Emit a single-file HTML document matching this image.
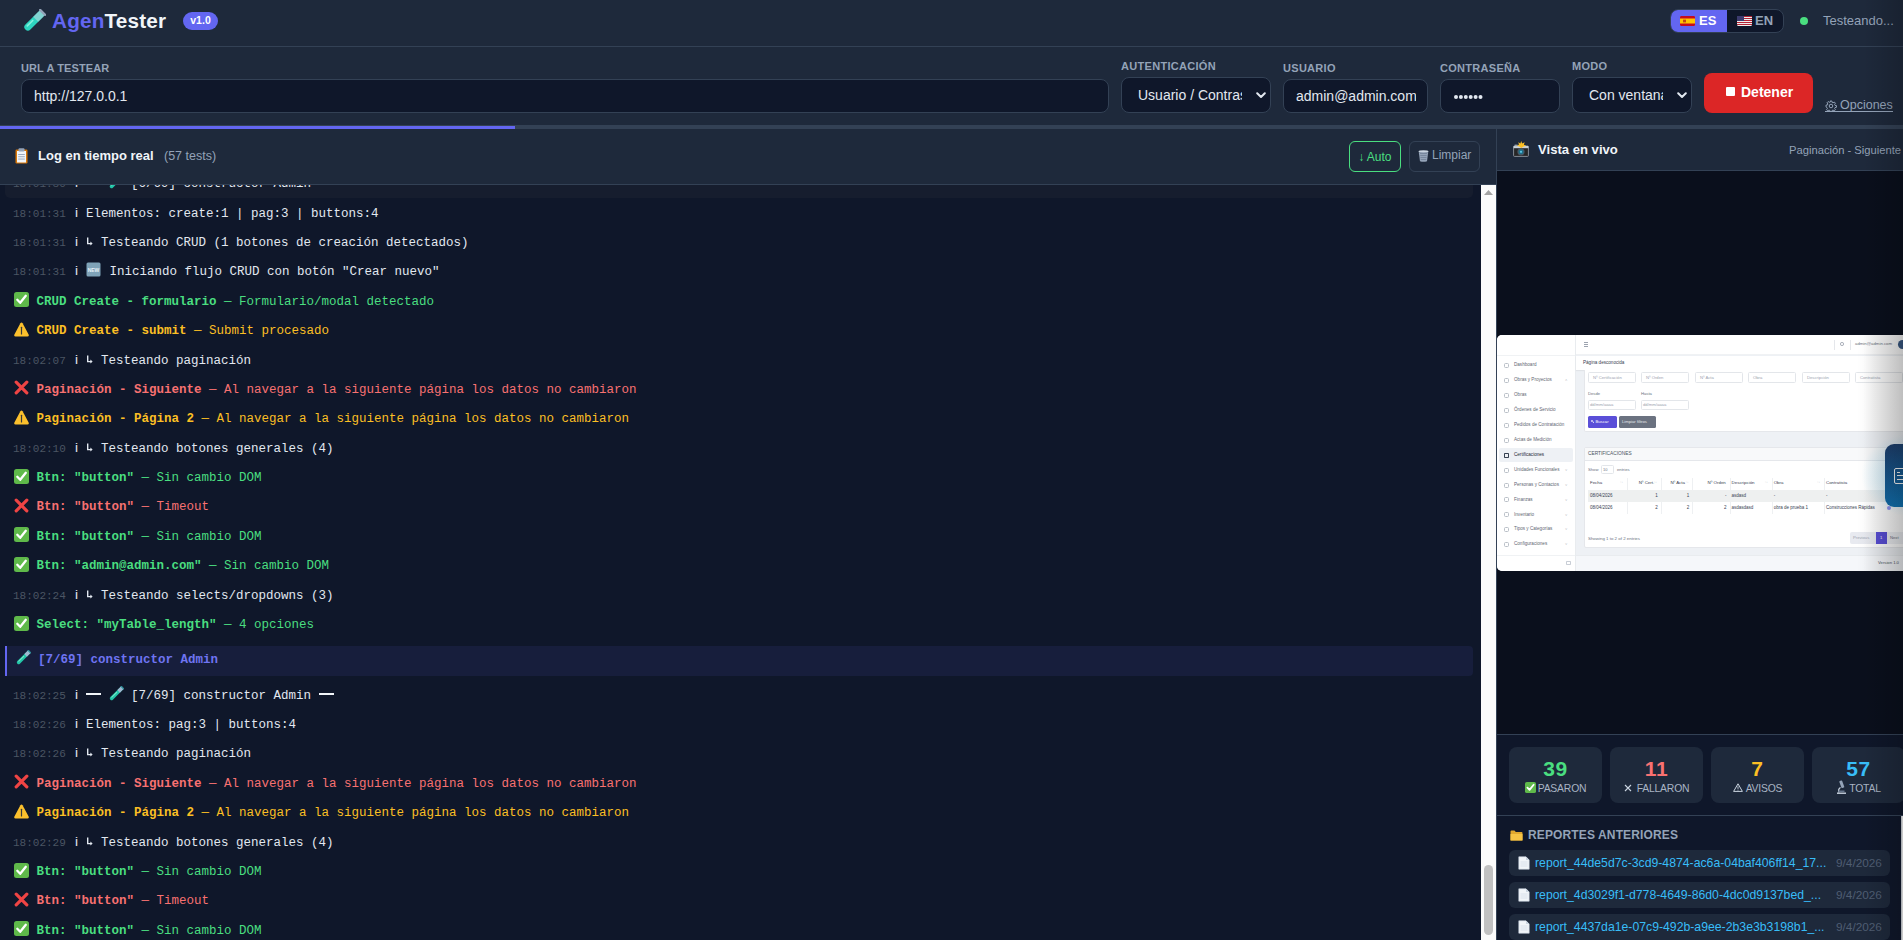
<!DOCTYPE html>
<html lang="es">
<head>
<meta charset="utf-8">
<title>AgenTester</title>
<style>
*{box-sizing:border-box;margin:0;padding:0}
html,body{width:1903px;height:940px;overflow:hidden;background:#0f172a;font-family:"Liberation Sans",sans-serif;color:#e2e8f0}
.abs{position:absolute}
#hdr{position:absolute;left:0;top:0;width:1903px;height:47px;background:#1e293b;border-bottom:1px solid #334155}
#cfg{position:absolute;left:0;top:47px;width:1903px;height:79px;background:#1e293b;border-bottom:1px solid #334155}
#prog{position:absolute;left:0;top:126px;width:1903px;height:3px;background:#334155}
#prog i{position:absolute;left:0;top:0;height:3px;width:515px;background:#6366f1}
.lbl{position:absolute;font-size:11px;font-weight:bold;letter-spacing:0.3px;color:#94a3b8;white-space:nowrap}
.inp{position:absolute;background:#0f172a;border:1px solid #334155;border-radius:8px;color:#e2e8f0;font-size:14px;white-space:nowrap;overflow:hidden}
#left{position:absolute;left:0;top:129px;width:1497px;height:811px;border-right:1px solid #334155;background:#0f172a}
#lhdr{position:absolute;left:0;top:0;width:1496px;height:56px;background:#1e293b;border-bottom:1px solid #334155}
#log{position:absolute;left:0;top:56px;width:1481px;height:755px;background:#0f172a;overflow:hidden;font-family:"Liberation Mono",monospace}
#sb{position:absolute;left:1481px;top:56px;width:15px;height:755px;background:#fbfbfb}
#right{position:absolute;left:1497px;top:129px;width:420px;height:811px;background:#0f172a}
#rhdr{position:absolute;left:0;top:0;width:420px;height:42px;background:#1e293b;border-bottom:1px solid #334155}
#live{position:absolute;left:0;top:42px;width:420px;height:564px;background:#0a0f1c;border-bottom:1px solid #334155}
#stats{position:absolute;left:0;top:606px;width:420px;height:81px;background:#0f172a;border-bottom:1px solid #334155}
#reps{position:absolute;left:0;top:687px;width:420px;height:124px;background:#0f172a}
#fade{position:absolute;left:1863px;top:0;width:40px;height:940px;background:linear-gradient(to right,rgba(0,0,0,0),rgba(0,0,0,0.18));pointer-events:none}
.row{position:absolute;left:13px;height:20px;line-height:20px;font-size:12.5px;white-space:nowrap;color:#e2e8f0}
.ts{display:inline-block;width:58px;font-size:11px;color:#4b5563}
.ii{display:inline-block;width:7.5px;font-family:"Liberation Sans",sans-serif;font-size:13.6px;text-align:right;padding-right:0.5px}
.em{display:inline-block;vertical-align:-2px;margin-right:1px}
.tb{margin-right:0}
.st{vertical-align:-2.5px;margin-left:0.8px;margin-right:0.2px}
.dash{display:inline-block;width:15px;height:2.2px;background:#f1f5f9;vertical-align:3.6px}
.ar{display:inline-block;vertical-align:-1px}
.cok{color:#4ade80}.cerr{color:#f87171}.cwarn{color:#fbbf24}
.hd{position:absolute;left:5px;width:1468px;height:30px;background:#171e3c;border-left:2px solid #6366f1;border-radius:0 4px 4px 0}
.card{position:absolute;top:12px;width:93px;height:56px;border-radius:8px;background:#1e293b}
.num{position:absolute;left:0;top:10px;width:93px;text-align:center;font-size:21px;font-weight:bold;line-height:24px;letter-spacing:0.6px}
.clbl{position:absolute;top:35px;left:0!important;width:93px;text-align:center;font-size:10.4px;letter-spacing:-0.2px;line-height:13px;color:#a9b4c4;white-space:nowrap}
.rep{position:absolute;left:12px;width:381px;height:26px;border-radius:6px;background:#1e293b}
.rn{position:absolute;left:26px;top:6px;font-size:12.25px;line-height:15px;color:#38bdf8;white-space:nowrap}
.rd{position:absolute;left:327px;top:6px;font-size:11.8px;line-height:14px;color:#4f5d72;white-space:nowrap}
</style>
</head>
<body>
<div id="hdr">
  <svg class="abs" style="left:21px;top:9px" width="25" height="25" viewBox="0 0 24 24">
    <g transform="rotate(45 12 12)">
      <rect x="8.6" y="-1" width="6.8" height="24" rx="3.4" fill="#2dd4bf"/>
      <rect x="8.6" y="-1" width="6.8" height="10" fill="#c7d2e0" opacity="0.55"/>
      <rect x="7.6" y="-1.5" width="8.8" height="2.2" rx="1" fill="#94a3b8"/>
      <rect x="10" y="11" width="1.6" height="9" rx="0.8" fill="#99f6e4" opacity="0.8"/>
    </g>
  </svg>
  <div class="abs" style="left:52px;top:9px;font-size:20.7px;font-weight:bold;line-height:24px;letter-spacing:0.2px"><span style="color:#6366f1">Agen</span><span style="color:#f1f5f9">Tester</span></div>
  <div class="abs" style="left:183px;top:12px;width:35px;height:18px;border-radius:9px;background:#6366f1;color:#fff;font-size:10.5px;font-weight:bold;line-height:17px;text-align:center">v1.0</div>
  <div class="abs" style="left:1670px;top:8.6px;width:114px;height:24.6px;border-radius:8px;border:1px solid #334155;background:#0f172a;overflow:hidden">
    <div class="abs" style="left:-1px;top:-1px;width:57px;height:25px;background:#6366f1"></div>
    <svg class="abs" style="left:9px;top:6.5px" width="15" height="10" viewBox="0 0 15 11" preserveAspectRatio="none"><rect width="15" height="11" rx="1.5" fill="#c60b1e"/><rect y="2.75" width="15" height="5.5" fill="#ffc400"/><rect x="3" y="4" width="3" height="3" fill="#ad1519" opacity="0.7"/></svg>
    <div class="abs" style="left:28px;top:0;line-height:22px;font-size:13px;font-weight:bold;color:#fff">ES</div>
    <svg class="abs" style="left:66px;top:6.5px" width="15" height="10" viewBox="0 0 15 11" preserveAspectRatio="none"><rect width="15" height="11" rx="1.5" fill="#eee"/><g fill="#b22234"><rect y="0" width="15" height="1.1"/><rect y="2.2" width="15" height="1.1"/><rect y="4.4" width="15" height="1.1"/><rect y="6.6" width="15" height="1.1"/><rect y="8.8" width="15" height="1.1"/></g><rect width="7" height="5.5" fill="#3c3b6e"/></svg>
    <div class="abs" style="left:84px;top:0;line-height:22px;font-size:13px;font-weight:bold;color:#94a3b8">EN</div>
  </div>
  <div class="abs" style="left:1800px;top:17px;width:8px;height:8px;border-radius:4px;background:#4ade80"></div>
  <div class="abs" style="left:1823px;top:12px;font-size:13px;line-height:18px;color:#94a3b8;white-space:nowrap">Testeando...</div>
</div>
<div id="cfg">
  <div class="lbl" style="left:21px;top:15px;letter-spacing:0.1px">URL A TESTEAR</div>
  <div class="inp" style="left:21px;top:32px;width:1088px;height:34px;padding-left:12px;line-height:32px">http://127.0.0.1</div>
  <div class="lbl" style="left:1121px;top:13px">AUTENTICACIÓN</div>
  <div class="inp" style="left:1121px;top:30px;width:150px;height:36px;line-height:34px"><span class="abs" style="left:16px;top:0;width:104px;overflow:hidden">Usuario / Contraseña</span><svg class="abs" style="right:4px;top:14px" width="10" height="7" viewBox="0 0 10 7"><path d="M1.2 1.2 L5 5 L8.8 1.2" fill="none" stroke="#e2e8f0" stroke-width="2" stroke-linecap="round" stroke-linejoin="round"/></svg></div>
  <div class="lbl" style="left:1283px;top:15px">USUARIO</div>
  <div class="inp" style="left:1283px;top:32px;width:145px;height:34px;line-height:32px"><span class="abs" style="left:12px;top:0;width:120px;overflow:hidden">admin@admin.com</span></div>
  <div class="lbl" style="left:1440px;top:15px">CONTRASEÑA</div>
  <div class="inp" style="left:1440px;top:32px;width:120px;height:34px"><svg class="abs" style="left:12.6px;top:15px" width="30" height="4" viewBox="0 0 30 4" fill="#e2e8f0"><circle cx="2.0" cy="2" r="2"/><circle cx="6.9" cy="2" r="2"/><circle cx="11.8" cy="2" r="2"/><circle cx="16.7" cy="2" r="2"/><circle cx="21.6" cy="2" r="2"/><circle cx="26.5" cy="2" r="2"/></svg></div>
  <div class="lbl" style="left:1572px;top:13px">MODO</div>
  <div class="inp" style="left:1572px;top:30px;width:120px;height:36px;line-height:34px"><span class="abs" style="left:16px;top:0;width:74px;overflow:hidden">Con ventana visible</span><svg class="abs" style="right:4px;top:14px" width="10" height="7" viewBox="0 0 10 7"><path d="M1.2 1.2 L5 5 L8.8 1.2" fill="none" stroke="#e2e8f0" stroke-width="2" stroke-linecap="round" stroke-linejoin="round"/></svg></div>
  <div class="abs" style="left:1704px;top:26px;width:109px;height:40px;border-radius:8px;background:#dc2626;color:#fff;font-size:14px;font-weight:bold;line-height:40px;white-space:nowrap"><span class="abs" style="left:22px;top:14px;width:9px;height:9px;background:#fff;border-radius:1px"></span><span class="abs" style="left:37px;top:-1px">Detener</span></div>
  <div class="abs" style="left:1825px;top:50px;width:68px;height:15px;font-size:12.5px;line-height:16px;color:#94a3b8;white-space:nowrap;border-bottom:1px solid #94a3b8"><svg style="position:absolute;left:0;top:2.5px" width="12" height="12" viewBox="0 0 24 24"><path fill="none" stroke="#94a3b8" stroke-width="2" stroke-linejoin="round" d="M10.3 2h3.4l.5 2.9 1.9.8 2.4-1.7 2.4 2.4-1.7 2.4.8 1.9 2.9.5v3.4l-2.9.5-.8 1.9 1.7 2.4-2.4 2.4-2.4-1.7-1.9.8-.5 2.9h-3.4l-.5-2.9-1.9-.8-2.4 1.7-2.4-2.4 1.7-2.4-.8-1.9L2 13.7v-3.4l2.9-.5.8-1.9-1.7-2.4 2.4-2.4 2.4 1.7 1.9-.8z"/><circle cx="12" cy="12" r="3.6" fill="none" stroke="#94a3b8" stroke-width="2"/></svg><span class="abs" style="left:15px;top:0">Opciones</span></div>
</div>
<div id="prog"><i></i></div>
<div id="left">
  <div id="lhdr">
    <svg class="abs" style="left:15px;top:19px" width="13" height="16" viewBox="0 0 13 16"><rect x="0.5" y="1.5" width="12" height="14" rx="1.2" fill="#d97706"/><rect x="2" y="3" width="9" height="11.5" fill="#f1f5f9"/><rect x="3.5" y="0.3" width="6" height="3.2" rx="1" fill="#94a3b8"/><g fill="#94a3b8"><rect x="3.2" y="6" width="6.6" height="0.9"/><rect x="3.2" y="8.3" width="6.6" height="0.9"/><rect x="3.2" y="10.6" width="6.6" height="0.9"/></g></svg>
    <div class="abs" style="left:38px;top:19px;font-size:13px;font-weight:bold;line-height:16px;color:#f1f5f9;white-space:nowrap">Log en tiempo real</div>
    <div class="abs" style="left:164px;top:19px;font-size:12.5px;line-height:16px;color:#94a3b8;white-space:nowrap">(57 tests)</div>
    <div class="abs" style="left:1349px;top:12px;width:52px;height:31px;border:1px solid #4ade80;border-radius:6px;color:#4ade80;font-size:12px;line-height:29px;white-space:nowrap"><span class="abs" style="left:8.2px;top:1px">&#8595; Auto</span></div>
    <div class="abs" style="left:1409px;top:12px;width:71px;height:31px;border:1px solid #334155;border-radius:6px;color:#94a3b8;font-size:12px;line-height:29px;white-space:nowrap"><svg class="abs" style="left:8px;top:8px" width="11" height="12" viewBox="0 0 11 12"><ellipse cx="5.5" cy="1.6" rx="5" ry="1.4" fill="#cbd5e1"/><path d="M0.8 2.2 L10.2 2.2 L9 11.2 Q5.5 12.2 2 11.2 Z" fill="#94a3b8"/><path d="M2 3.5 L9 3.5 M2.3 5.5 L8.7 5.5 M2.5 7.5 L8.5 7.5 M2.8 9.5 L8.2 9.5" stroke="#64748b" stroke-width="0.6"/></svg><span class="abs" style="left:22px;top:-1px">Limpiar</span></div>
  </div>
  <div id="log"><div class="abs" style="left:5px;top:-20px;width:1468px;height:32.8px;border-radius:5px;background:#161d2e"></div>
<div class="row" style="top:-11.82px"><span class="ts">18:01:30</span><span class="ii">i</span> <span class="msg"><span class="dash"></span> <svg class="em tb" width="15" height="15" viewBox="0 0 15 15"><g transform="rotate(45 7.5 7.5)"><rect x="5.7" y="-1" width="3.6" height="17.2" rx="1.8" fill="#22c5a8"/><rect x="5.7" y="-1" width="3.6" height="5.5" fill="#9fb8d0"/><rect x="5.1" y="-1.6" width="4.8" height="1.4" rx="0.5" fill="#2f8f9a"/><rect x="6.3" y="6" width="1" height="8" rx="0.5" fill="#a7f3d0" opacity="0.7"/></g></svg> [6/69] constructor Admin <span class="dash"></span></span></div>
<div class="row" style="top:17.57px"><span class="ts">18:01:31</span><span class="ii">i</span> <span class="msg">Elementos: create:1 | pag:3 | buttons:4</span></div>
<div class="row" style="top:46.96px"><span class="ts">18:01:31</span><span class="ii">i</span> <span class="msg"><svg class="ar" width="7.5" height="12" viewBox="0 0 7.5 12"><path d="M1.7 2.6 L1.7 8.6 L5.6 8.6" fill="none" stroke="#e2e8f0" stroke-width="1.4"/><path d="M4.4 6.6 L6.6 8.6 L4.4 10.6 Z" fill="#e2e8f0"/></svg> Testeando CRUD (1 botones de creación detectados)</span></div>
<div class="row" style="top:76.35px"><span class="ts">18:01:31</span><span class="ii">i</span> <span class="msg"><svg class="em" width="15" height="15" viewBox="0 0 15 15"><rect x="0.5" y="0.5" width="14" height="14" rx="1.5" fill="#7fa3b8"/><text x="7.5" y="9.6" font-family="Liberation Sans" font-size="5" font-weight="bold" fill="#e8f2f8" text-anchor="middle">NEW</text></svg> Iniciando flujo CRUD con botón "Crear nuevo"</span></div>
<div style="top:106.74px" class="row cok"><svg class="em st" width="15" height="15" viewBox="0 0 15 15"><rect x="0" y="0" width="15" height="15" rx="2.5" fill="#5fb94a"/><path d="M3.3 7.8 L6.2 10.8 L11.8 3.8" fill="none" stroke="#fff" stroke-width="2.3" stroke-linecap="round" stroke-linejoin="round"/></svg> <b>CRUD Create - formulario</b> — Formulario/modal detectado</div>
<div style="top:136.13px" class="row cwarn"><svg class="em st" width="15" height="15" viewBox="0 0 15 15"><path d="M6.4 1.3 Q7.5 -0.4 8.6 1.3 L14.6 12.6 Q15.3 14.4 13.4 14.4 L1.6 14.4 Q-0.3 14.4 0.4 12.6 Z" fill="#fbc02d"/><rect x="6.9" y="4.8" width="1.2" height="7.8" rx="0.5" fill="#3b3b3b"/></svg> <b>CRUD Create - submit</b> — Submit procesado</div>
<div class="row" style="top:164.52px"><span class="ts">18:02:07</span><span class="ii">i</span> <span class="msg"><svg class="ar" width="7.5" height="12" viewBox="0 0 7.5 12"><path d="M1.7 2.6 L1.7 8.6 L5.6 8.6" fill="none" stroke="#e2e8f0" stroke-width="1.4"/><path d="M4.4 6.6 L6.6 8.6 L4.4 10.6 Z" fill="#e2e8f0"/></svg> Testeando paginación</span></div>
<div style="top:194.91px" class="row cerr"><svg class="em st" width="15" height="15" viewBox="0 0 15 15"><path d="M2.2 2.2 L12.8 12.8 M12.8 2.2 L2.2 12.8" stroke="#ef4444" stroke-width="3.2" stroke-linecap="round"/></svg> <b>Paginación - Siguiente</b> — Al navegar a la siguiente página los datos no cambiaron</div>
<div style="top:224.30px" class="row cwarn"><svg class="em st" width="15" height="15" viewBox="0 0 15 15"><path d="M6.4 1.3 Q7.5 -0.4 8.6 1.3 L14.6 12.6 Q15.3 14.4 13.4 14.4 L1.6 14.4 Q-0.3 14.4 0.4 12.6 Z" fill="#fbc02d"/><rect x="6.9" y="4.8" width="1.2" height="7.8" rx="0.5" fill="#3b3b3b"/></svg> <b>Paginación - Página 2</b> — Al navegar a la siguiente página los datos no cambiaron</div>
<div class="row" style="top:252.69px"><span class="ts">18:02:10</span><span class="ii">i</span> <span class="msg"><svg class="ar" width="7.5" height="12" viewBox="0 0 7.5 12"><path d="M1.7 2.6 L1.7 8.6 L5.6 8.6" fill="none" stroke="#e2e8f0" stroke-width="1.4"/><path d="M4.4 6.6 L6.6 8.6 L4.4 10.6 Z" fill="#e2e8f0"/></svg> Testeando botones generales (4)</span></div>
<div style="top:283.08px" class="row cok"><svg class="em st" width="15" height="15" viewBox="0 0 15 15"><rect x="0" y="0" width="15" height="15" rx="2.5" fill="#5fb94a"/><path d="M3.3 7.8 L6.2 10.8 L11.8 3.8" fill="none" stroke="#fff" stroke-width="2.3" stroke-linecap="round" stroke-linejoin="round"/></svg> <b>Btn: "button"</b> — Sin cambio DOM</div>
<div style="top:312.47px" class="row cerr"><svg class="em st" width="15" height="15" viewBox="0 0 15 15"><path d="M2.2 2.2 L12.8 12.8 M12.8 2.2 L2.2 12.8" stroke="#ef4444" stroke-width="3.2" stroke-linecap="round"/></svg> <b>Btn: "button"</b> — Timeout</div>
<div style="top:341.86px" class="row cok"><svg class="em st" width="15" height="15" viewBox="0 0 15 15"><rect x="0" y="0" width="15" height="15" rx="2.5" fill="#5fb94a"/><path d="M3.3 7.8 L6.2 10.8 L11.8 3.8" fill="none" stroke="#fff" stroke-width="2.3" stroke-linecap="round" stroke-linejoin="round"/></svg> <b>Btn: "button"</b> — Sin cambio DOM</div>
<div style="top:371.25px" class="row cok"><svg class="em st" width="15" height="15" viewBox="0 0 15 15"><rect x="0" y="0" width="15" height="15" rx="2.5" fill="#5fb94a"/><path d="M3.3 7.8 L6.2 10.8 L11.8 3.8" fill="none" stroke="#fff" stroke-width="2.3" stroke-linecap="round" stroke-linejoin="round"/></svg> <b>Btn: "admin@admin.com"</b> — Sin cambio DOM</div>
<div class="row" style="top:399.64px"><span class="ts">18:02:24</span><span class="ii">i</span> <span class="msg"><svg class="ar" width="7.5" height="12" viewBox="0 0 7.5 12"><path d="M1.7 2.6 L1.7 8.6 L5.6 8.6" fill="none" stroke="#e2e8f0" stroke-width="1.4"/><path d="M4.4 6.6 L6.6 8.6 L4.4 10.6 Z" fill="#e2e8f0"/></svg> Testeando selects/dropdowns (3)</span></div>
<div style="top:430.03px" class="row cok"><svg class="em st" width="15" height="15" viewBox="0 0 15 15"><rect x="0" y="0" width="15" height="15" rx="2.5" fill="#5fb94a"/><path d="M3.3 7.8 L6.2 10.8 L11.8 3.8" fill="none" stroke="#fff" stroke-width="2.3" stroke-linecap="round" stroke-linejoin="round"/></svg> <b>Select: "myTable_length"</b> — 4 opciones</div>
<div class="hd" style="top:461px"></div>
<div class="row" style="top:465.17px;left:15.5px;color:#6f74f2;font-weight:bold"><svg class="em tb" width="15" height="15" viewBox="0 0 15 15"><g transform="rotate(45 7.5 7.5)"><rect x="5.7" y="-1" width="3.6" height="17.2" rx="1.8" fill="#22c5a8"/><rect x="5.7" y="-1" width="3.6" height="5.5" fill="#9fb8d0"/><rect x="5.1" y="-1.6" width="4.8" height="1.4" rx="0.5" fill="#2f8f9a"/><rect x="6.3" y="6" width="1" height="8" rx="0.5" fill="#a7f3d0" opacity="0.7"/></g></svg> [7/69] constructor Admin</div>
<div class="row" style="top:499.67px"><span class="ts">18:02:25</span><span class="ii">i</span> <span class="msg"><span class="dash"></span> <svg class="em tb" width="15" height="15" viewBox="0 0 15 15"><g transform="rotate(45 7.5 7.5)"><rect x="5.7" y="-1" width="3.6" height="17.2" rx="1.8" fill="#22c5a8"/><rect x="5.7" y="-1" width="3.6" height="5.5" fill="#9fb8d0"/><rect x="5.1" y="-1.6" width="4.8" height="1.4" rx="0.5" fill="#2f8f9a"/><rect x="6.3" y="6" width="1" height="8" rx="0.5" fill="#a7f3d0" opacity="0.7"/></g></svg> [7/69] constructor Admin <span class="dash"></span></span></div>
<div class="row" style="top:529.06px"><span class="ts">18:02:26</span><span class="ii">i</span> <span class="msg">Elementos: pag:3 | buttons:4</span></div>
<div class="row" style="top:558.45px"><span class="ts">18:02:26</span><span class="ii">i</span> <span class="msg"><svg class="ar" width="7.5" height="12" viewBox="0 0 7.5 12"><path d="M1.7 2.6 L1.7 8.6 L5.6 8.6" fill="none" stroke="#e2e8f0" stroke-width="1.4"/><path d="M4.4 6.6 L6.6 8.6 L4.4 10.6 Z" fill="#e2e8f0"/></svg> Testeando paginación</span></div>
<div style="top:588.84px" class="row cerr"><svg class="em st" width="15" height="15" viewBox="0 0 15 15"><path d="M2.2 2.2 L12.8 12.8 M12.8 2.2 L2.2 12.8" stroke="#ef4444" stroke-width="3.2" stroke-linecap="round"/></svg> <b>Paginación - Siguiente</b> — Al navegar a la siguiente página los datos no cambiaron</div>
<div style="top:618.23px" class="row cwarn"><svg class="em st" width="15" height="15" viewBox="0 0 15 15"><path d="M6.4 1.3 Q7.5 -0.4 8.6 1.3 L14.6 12.6 Q15.3 14.4 13.4 14.4 L1.6 14.4 Q-0.3 14.4 0.4 12.6 Z" fill="#fbc02d"/><rect x="6.9" y="4.8" width="1.2" height="7.8" rx="0.5" fill="#3b3b3b"/></svg> <b>Paginación - Página 2</b> — Al navegar a la siguiente página los datos no cambiaron</div>
<div class="row" style="top:646.62px"><span class="ts">18:02:29</span><span class="ii">i</span> <span class="msg"><svg class="ar" width="7.5" height="12" viewBox="0 0 7.5 12"><path d="M1.7 2.6 L1.7 8.6 L5.6 8.6" fill="none" stroke="#e2e8f0" stroke-width="1.4"/><path d="M4.4 6.6 L6.6 8.6 L4.4 10.6 Z" fill="#e2e8f0"/></svg> Testeando botones generales (4)</span></div>
<div style="top:677.01px" class="row cok"><svg class="em st" width="15" height="15" viewBox="0 0 15 15"><rect x="0" y="0" width="15" height="15" rx="2.5" fill="#5fb94a"/><path d="M3.3 7.8 L6.2 10.8 L11.8 3.8" fill="none" stroke="#fff" stroke-width="2.3" stroke-linecap="round" stroke-linejoin="round"/></svg> <b>Btn: "button"</b> — Sin cambio DOM</div>
<div style="top:706.40px" class="row cerr"><svg class="em st" width="15" height="15" viewBox="0 0 15 15"><path d="M2.2 2.2 L12.8 12.8 M12.8 2.2 L2.2 12.8" stroke="#ef4444" stroke-width="3.2" stroke-linecap="round"/></svg> <b>Btn: "button"</b> — Timeout</div>
<div style="top:735.79px" class="row cok"><svg class="em st" width="15" height="15" viewBox="0 0 15 15"><rect x="0" y="0" width="15" height="15" rx="2.5" fill="#5fb94a"/><path d="M3.3 7.8 L6.2 10.8 L11.8 3.8" fill="none" stroke="#fff" stroke-width="2.3" stroke-linecap="round" stroke-linejoin="round"/></svg> <b>Btn: "button"</b> — Sin cambio DOM</div></div>
  <div id="sb"><svg class="abs" style="left:3px;top:5px" width="9" height="5" viewBox="0 0 9 5"><path d="M0 5 L4.5 0 L9 5 Z" fill="#a3a3a3"/></svg><div class="abs" style="left:3px;top:680px;width:9px;height:70px;border-radius:4.5px;background:#c1c1c1"></div></div>
</div>
<div id="right">
  <div id="rhdr">
    <svg class="abs" style="left:16px;top:12px" width="16" height="16" viewBox="0 0 16 16"><rect x="0.6" y="5" width="14.8" height="10.4" rx="0.8" fill="#262626" stroke="#8e96a0" stroke-width="0.9"/><rect x="0.6" y="5" width="14.8" height="2.2" fill="#c9d1d9"/><rect x="1.6" y="3.6" width="3" height="1.6" fill="#9aa3ad"/><circle cx="8" cy="10.8" r="3.6" fill="#4b5563"/><circle cx="8" cy="10.8" r="2.5" fill="#1d6f88"/><circle cx="8" cy="10.8" r="1.1" fill="#5ec4e6"/><path d="M8.2 0 L9.2 2.4 L11.6 1.2 L10.9 3.8 L13.2 4.6 L10.6 5.6 L8.2 7 L6.4 5.4 L4 4.8 L6 3.6 L5.2 1.2 L7.4 2.4 Z" fill="#fbbf24"/></svg>
    <div class="abs" style="left:41px;top:13px;font-size:13.1px;font-weight:bold;line-height:16px;color:#f1f5f9;white-space:nowrap">Vista en vivo</div>
    <div class="abs" style="right:16px;top:12.8px;font-size:11.2px;line-height:16px;color:#94a3b8;white-space:nowrap">Paginación - Siguiente</div>
  </div>
  <div id="live"><div id="shot" style="position:absolute;left:0;top:164px;width:420px;height:236px;overflow:hidden;border-radius:5px;font-family:'Liberation Sans',sans-serif"><div style="position:absolute;left:0px;top:0px;width:420px;height:236px;background:#eef1f5"></div><div style="position:absolute;left:0px;top:0px;width:79px;height:236px;background:#fff;border-right:1px solid #e9ecef"></div><div style="position:absolute;left:0px;top:20px;width:78px;height:1px;background:#f0f2f4"></div><div style="position:absolute;left:7px;top:27.8px;width:5px;height:5px;border:0.7px solid #b9bfc7;border-radius:1.5px"></div><div style="position:absolute;left:17px;top:26.3px;height:8px;line-height:8px;font-size:4.6px;color:#5f6773;white-space:nowrap;">Dashboard</div><div style="position:absolute;left:7px;top:42.900000000000006px;width:5px;height:5px;border:0.7px solid #b9bfc7;border-radius:1.5px"></div><div style="position:absolute;left:17px;top:41.400000000000006px;height:8px;line-height:8px;font-size:4.6px;color:#5f6773;white-space:nowrap;">Obras y Proyectos</div><div style="position:absolute;left:68px;top:41.400000000000006px;height:8px;line-height:8px;font-size:4px;color:#c0c4ca;white-space:nowrap;">˄</div><div style="position:absolute;left:7px;top:57.6px;width:5px;height:5px;border:0.7px solid #b9bfc7;border-radius:1.5px"></div><div style="position:absolute;left:17px;top:56.1px;height:8px;line-height:8px;font-size:4.6px;color:#5f6773;white-space:nowrap;">Obras</div><div style="position:absolute;left:7px;top:72.5px;width:5px;height:5px;border:0.7px solid #b9bfc7;border-radius:1.5px"></div><div style="position:absolute;left:17px;top:71.0px;height:8px;line-height:8px;font-size:4.6px;color:#5f6773;white-space:nowrap;">Órdenes de Servicio</div><div style="position:absolute;left:7px;top:87.60000000000001px;width:5px;height:5px;border:0.7px solid #b9bfc7;border-radius:1.5px"></div><div style="position:absolute;left:17px;top:86.10000000000001px;height:8px;line-height:8px;font-size:4.6px;color:#5f6773;white-space:nowrap;">Pedidos de Contratación</div><div style="position:absolute;left:7px;top:102.8px;width:5px;height:5px;border:0.7px solid #b9bfc7;border-radius:1.5px"></div><div style="position:absolute;left:17px;top:101.3px;height:8px;line-height:8px;font-size:4.6px;color:#5f6773;white-space:nowrap;">Actas de Medición</div><div style="position:absolute;left:2px;top:113.4px;width:74px;height:14px;background:#eef1f5;border-radius:2px"></div><div style="position:absolute;left:7px;top:117.9px;width:5px;height:5px;border:0.9px solid #374151;border-radius:0.8px"></div><div style="position:absolute;left:17px;top:116.4px;height:8px;line-height:8px;font-size:4.6px;color:#1f2937;white-space:nowrap;">Certificaciones</div><div style="position:absolute;left:7px;top:132.89999999999998px;width:5px;height:5px;border:0.7px solid #b9bfc7;border-radius:1.5px"></div><div style="position:absolute;left:17px;top:131.39999999999998px;height:8px;line-height:8px;font-size:4.6px;color:#5f6773;white-space:nowrap;">Unidades Funcionales</div><div style="position:absolute;left:68px;top:131.39999999999998px;height:8px;line-height:8px;font-size:4px;color:#c0c4ca;white-space:nowrap;">˅</div><div style="position:absolute;left:7px;top:147.7px;width:5px;height:5px;border:0.7px solid #b9bfc7;border-radius:1.5px"></div><div style="position:absolute;left:17px;top:146.2px;height:8px;line-height:8px;font-size:4.6px;color:#5f6773;white-space:nowrap;">Personas y Contactos</div><div style="position:absolute;left:68px;top:146.2px;height:8px;line-height:8px;font-size:4px;color:#c0c4ca;white-space:nowrap;">˅</div><div style="position:absolute;left:7px;top:162.39999999999998px;width:5px;height:5px;border:0.7px solid #b9bfc7;border-radius:1.5px"></div><div style="position:absolute;left:17px;top:160.89999999999998px;height:8px;line-height:8px;font-size:4.6px;color:#5f6773;white-space:nowrap;">Finanzas</div><div style="position:absolute;left:68px;top:160.89999999999998px;height:8px;line-height:8px;font-size:4px;color:#c0c4ca;white-space:nowrap;">˅</div><div style="position:absolute;left:7px;top:177.2px;width:5px;height:5px;border:0.7px solid #b9bfc7;border-radius:1.5px"></div><div style="position:absolute;left:17px;top:175.7px;height:8px;line-height:8px;font-size:4.6px;color:#5f6773;white-space:nowrap;">Inventario</div><div style="position:absolute;left:68px;top:175.7px;height:8px;line-height:8px;font-size:4px;color:#c0c4ca;white-space:nowrap;">˅</div><div style="position:absolute;left:7px;top:191.89999999999998px;width:5px;height:5px;border:0.7px solid #b9bfc7;border-radius:1.5px"></div><div style="position:absolute;left:17px;top:190.39999999999998px;height:8px;line-height:8px;font-size:4.6px;color:#5f6773;white-space:nowrap;">Tipos y Categorías</div><div style="position:absolute;left:68px;top:190.39999999999998px;height:8px;line-height:8px;font-size:4px;color:#c0c4ca;white-space:nowrap;">˅</div><div style="position:absolute;left:7px;top:206.7px;width:5px;height:5px;border:0.7px solid #b9bfc7;border-radius:1.5px"></div><div style="position:absolute;left:17px;top:205.2px;height:8px;line-height:8px;font-size:4.6px;color:#5f6773;white-space:nowrap;">Configuraciones</div><div style="position:absolute;left:68px;top:205.2px;height:8px;line-height:8px;font-size:4px;color:#c0c4ca;white-space:nowrap;">˅</div><div style="position:absolute;left:0px;top:220px;width:78px;height:1px;background:#f0f2f4"></div><div style="position:absolute;left:69px;top:226px;width:5px;height:4px;border:0.7px solid #c9ced6;border-radius:0.8px"></div><div style="position:absolute;left:79px;top:0px;width:341px;height:20px;background:#fff;border-bottom:1px solid #f0f2f4"></div><div style="position:absolute;left:87px;top:7px;width:4px;height:0.8px;background:#9ca3af"></div><div style="position:absolute;left:87px;top:9px;width:4px;height:0.8px;background:#9ca3af"></div><div style="position:absolute;left:87px;top:11px;width:4px;height:0.8px;background:#9ca3af"></div><div style="position:absolute;left:337px;top:5px;width:0.6px;height:10px;background:#e5e7eb"></div><div style="position:absolute;left:353px;top:5px;width:0.6px;height:10px;background:#e5e7eb"></div><div style="position:absolute;left:343px;top:7px;width:3.5px;height:3.5px;border:0.8px solid #9ca3af;border-radius:50%"></div><div style="position:absolute;left:358px;top:5px;height:8px;line-height:8px;font-size:4.3px;color:#6b7280;white-space:nowrap;">admin@admin.com</div><div style="position:absolute;left:401px;top:5px;width:9px;height:9px;background:#3b5b87;border-radius:50%"></div><div style="position:absolute;left:79px;top:21px;width:341px;height:14px;background:#fff;box-shadow:0 1px 1px rgba(0,0,0,0.05)"></div><div style="position:absolute;left:86px;top:23.5px;height:8px;line-height:8px;font-size:4.6px;color:#374151;white-space:nowrap;">Página desconocida</div><div style="position:absolute;left:87px;top:35px;width:333px;height:62px;background:#fff;border:0.6px solid #e5e7eb;border-top:none;border-radius:0 0 2px 2px"></div><div style="position:absolute;left:91px;top:37px;width:48px;height:11px;background:#fff;border:0.6px solid #e3e6ea;border-radius:1.5px"></div><div style="position:absolute;left:96px;top:38.5px;height:8px;line-height:8px;font-size:4.2px;color:#9ca3af;white-space:nowrap;">Nº Certificación</div><div style="position:absolute;left:144px;top:37px;width:48px;height:11px;background:#fff;border:0.6px solid #e3e6ea;border-radius:1.5px"></div><div style="position:absolute;left:149px;top:38.5px;height:8px;line-height:8px;font-size:4.2px;color:#9ca3af;white-space:nowrap;">Nº Orden</div><div style="position:absolute;left:198px;top:37px;width:48px;height:11px;background:#fff;border:0.6px solid #e3e6ea;border-radius:1.5px"></div><div style="position:absolute;left:203px;top:38.5px;height:8px;line-height:8px;font-size:4.2px;color:#9ca3af;white-space:nowrap;">Nº Acta</div><div style="position:absolute;left:251px;top:37px;width:48px;height:11px;background:#fff;border:0.6px solid #e3e6ea;border-radius:1.5px"></div><div style="position:absolute;left:256px;top:38.5px;height:8px;line-height:8px;font-size:4.2px;color:#9ca3af;white-space:nowrap;">Obra</div><div style="position:absolute;left:305px;top:37px;width:48px;height:11px;background:#fff;border:0.6px solid #e3e6ea;border-radius:1.5px"></div><div style="position:absolute;left:310px;top:38.5px;height:8px;line-height:8px;font-size:4.2px;color:#9ca3af;white-space:nowrap;">Descripción</div><div style="position:absolute;left:358px;top:37px;width:48px;height:11px;background:#fff;border:0.6px solid #e3e6ea;border-radius:1.5px"></div><div style="position:absolute;left:363px;top:38.5px;height:8px;line-height:8px;font-size:4.2px;color:#9ca3af;white-space:nowrap;">Contratista</div><div style="position:absolute;left:91px;top:55px;height:8px;line-height:8px;font-size:4.2px;color:#6b7280;white-space:nowrap;">Desde</div><div style="position:absolute;left:144px;top:55px;height:8px;line-height:8px;font-size:4.2px;color:#6b7280;white-space:nowrap;">Hasta</div><div style="position:absolute;left:91px;top:65px;width:48px;height:10px;background:#fff;border:0.6px solid #e3e6ea;border-radius:1.5px"></div><div style="position:absolute;left:93px;top:66px;height:8px;line-height:8px;font-size:4.2px;color:#9ca3af;white-space:nowrap;">dd/mm/aaaa</div><div style="position:absolute;left:144px;top:65px;width:48px;height:10px;background:#fff;border:0.6px solid #e3e6ea;border-radius:1.5px"></div><div style="position:absolute;left:146px;top:66px;height:8px;line-height:8px;font-size:4.2px;color:#9ca3af;white-space:nowrap;">dd/mm/aaaa</div><div style="position:absolute;left:91px;top:81px;width:29px;height:12px;background:#5a4fd8;border-radius:1.5px"></div><div style="position:absolute;left:93.5px;top:84.6px;width:2.6px;height:2.6px;border:0.7px solid #fff;border-radius:50%"></div><div style="position:absolute;left:95.6px;top:86.8px;width:1.4px;height:0.7px;background:#fff;transform:rotate(45deg)"></div><div style="position:absolute;left:98.5px;top:83px;height:8px;line-height:8px;font-size:4.2px;color:#fff;white-space:nowrap;">Buscar</div><div style="position:absolute;left:122px;top:81px;width:37px;height:12px;background:#6b7280;border-radius:1.5px"></div><div style="position:absolute;left:125px;top:83px;height:8px;line-height:8px;font-size:4.2px;color:#e5e7eb;white-space:nowrap;">Limpiar filtros</div><div style="position:absolute;left:87px;top:112px;width:333px;height:101px;background:#fff;border:0.6px solid #e5e7eb;border-radius:2px"></div><div style="position:absolute;left:87.6px;top:112.6px;width:333px;height:13px;background:#f8f9fa;border-bottom:0.7px solid #e5e7eb"></div><div style="position:absolute;left:91px;top:115px;height:8px;line-height:8px;font-size:4.8px;color:#4b5563;white-space:nowrap;">CERTIFICACIONES</div><div style="position:absolute;left:91px;top:131px;height:8px;line-height:8px;font-size:4.2px;color:#6b7280;white-space:nowrap;">Show</div><div style="position:absolute;left:104px;top:130px;width:13px;height:9px;border:0.6px solid #e3e6ea;border-radius:1.5px"></div><div style="position:absolute;left:106px;top:130.5px;height:8px;line-height:8px;font-size:4px;color:#6b7280;white-space:nowrap;">10</div><div style="position:absolute;left:120px;top:131px;height:8px;line-height:8px;font-size:4.2px;color:#6b7280;white-space:nowrap;">entries</div><div style="position:absolute;left:93px;top:144px;height:8px;line-height:8px;font-size:4.4px;color:#374151;white-space:nowrap;">Fecha</div><div style="position:absolute;left:123px;top:142.5px;height:8px;line-height:8px;font-size:3px;color:#c4c9d0;white-space:nowrap;">↑↓</div><div style="position:absolute;left:141.7px;top:144px;height:8px;line-height:8px;font-size:4.4px;color:#374151;white-space:nowrap;">Nº Cert.</div><div style="position:absolute;left:156.7px;top:142.5px;height:8px;line-height:8px;font-size:3px;color:#c4c9d0;white-space:nowrap;">↑↓</div><div style="position:absolute;left:173.4px;top:144px;height:8px;line-height:8px;font-size:4.4px;color:#374151;white-space:nowrap;">Nº Acta</div><div style="position:absolute;left:188.4px;top:142.5px;height:8px;line-height:8px;font-size:3px;color:#c4c9d0;white-space:nowrap;">↑↓</div><div style="position:absolute;left:210.6px;top:144px;height:8px;line-height:8px;font-size:4.4px;color:#374151;white-space:nowrap;">Nº Orden</div><div style="position:absolute;left:225.6px;top:142.5px;height:8px;line-height:8px;font-size:3px;color:#c4c9d0;white-space:nowrap;">↑↓</div><div style="position:absolute;left:234.6px;top:144px;height:8px;line-height:8px;font-size:4.4px;color:#374151;white-space:nowrap;">Descripción</div><div style="position:absolute;left:267.7px;top:142.5px;height:8px;line-height:8px;font-size:3px;color:#c4c9d0;white-space:nowrap;">↑↓</div><div style="position:absolute;left:276.7px;top:144px;height:8px;line-height:8px;font-size:4.4px;color:#374151;white-space:nowrap;">Obra</div><div style="position:absolute;left:320px;top:142.5px;height:8px;line-height:8px;font-size:3px;color:#c4c9d0;white-space:nowrap;">↑↓</div><div style="position:absolute;left:329px;top:144px;height:8px;line-height:8px;font-size:4.4px;color:#374151;white-space:nowrap;">Contratista</div><div style="position:absolute;left:393px;top:142.5px;height:8px;line-height:8px;font-size:3px;color:#c4c9d0;white-space:nowrap;">↑↓</div><div style="position:absolute;left:130px;top:143px;width:0.6px;height:36px;background:#eef0f2"></div><div style="position:absolute;left:163.7px;top:143px;width:0.6px;height:36px;background:#eef0f2"></div><div style="position:absolute;left:195.4px;top:143px;width:0.6px;height:36px;background:#eef0f2"></div><div style="position:absolute;left:232.6px;top:143px;width:0.6px;height:36px;background:#eef0f2"></div><div style="position:absolute;left:274.7px;top:143px;width:0.6px;height:36px;background:#eef0f2"></div><div style="position:absolute;left:327px;top:143px;width:0.6px;height:36px;background:#eef0f2"></div><div style="position:absolute;left:91px;top:155px;width:329px;height:12px;background:#eef0f0"></div><div style="position:absolute;left:93px;top:157px;height:8px;line-height:8px;font-size:4.5px;color:#374151;white-space:nowrap;">08/04/2026</div><div style="position:absolute;left:130px;top:157px;width:30.69999999999999px;text-align:right;height:8px;line-height:8px;font-size:4.5px;color:#374151;white-space:nowrap">1</div><div style="position:absolute;left:163.7px;top:157px;width:28.700000000000017px;text-align:right;height:8px;line-height:8px;font-size:4.5px;color:#374151;white-space:nowrap">1</div><div style="position:absolute;left:195.4px;top:157px;width:34.19999999999999px;text-align:right;height:8px;line-height:8px;font-size:4.5px;color:#374151;white-space:nowrap">-</div><div style="position:absolute;left:234.6px;top:157px;height:8px;line-height:8px;font-size:4.5px;color:#374151;white-space:nowrap;">asdasd</div><div style="position:absolute;left:276.7px;top:157px;height:8px;line-height:8px;font-size:4.5px;color:#374151;white-space:nowrap;">-</div><div style="position:absolute;left:329px;top:157px;height:8px;line-height:8px;font-size:4.5px;color:#374151;white-space:nowrap;">-</div><div style="position:absolute;left:93px;top:169px;height:8px;line-height:8px;font-size:4.5px;color:#374151;white-space:nowrap;">08/04/2026</div><div style="position:absolute;left:130px;top:169px;width:30.69999999999999px;text-align:right;height:8px;line-height:8px;font-size:4.5px;color:#374151;white-space:nowrap">2</div><div style="position:absolute;left:163.7px;top:169px;width:28.700000000000017px;text-align:right;height:8px;line-height:8px;font-size:4.5px;color:#374151;white-space:nowrap">2</div><div style="position:absolute;left:195.4px;top:169px;width:34.19999999999999px;text-align:right;height:8px;line-height:8px;font-size:4.5px;color:#374151;white-space:nowrap">2</div><div style="position:absolute;left:234.6px;top:169px;height:8px;line-height:8px;font-size:4.5px;color:#374151;white-space:nowrap;">asdasdasd</div><div style="position:absolute;left:276.7px;top:169px;height:8px;line-height:8px;font-size:4.5px;color:#374151;white-space:nowrap;">obra de prueba 1</div><div style="position:absolute;left:329px;top:169px;height:8px;line-height:8px;font-size:4.5px;color:#374151;white-space:nowrap;">Construcciones Rápidas</div><div style="position:absolute;left:389.5px;top:170.5px;width:4px;height:4px;background:#6366f1;border-radius:50%;opacity:0.7"></div><div style="position:absolute;left:91px;top:200px;height:8px;line-height:8px;font-size:4.4px;color:#6b7280;white-space:nowrap;">Showing 1 to 2 of 2 entries</div><div style="position:absolute;left:353px;top:197px;width:26px;height:12px;background:#e8eaf0;border-radius:2px 0 0 2px"></div><div style="position:absolute;left:356px;top:199px;height:8px;line-height:8px;font-size:4.2px;color:#9ca3af;white-space:nowrap;">Previous</div><div style="position:absolute;left:379px;top:197px;width:11px;height:12px;background:#5a4fd8"></div><div style="position:absolute;left:383px;top:199px;height:8px;line-height:8px;font-size:4.2px;color:#fff;white-space:nowrap;">1</div><div style="position:absolute;left:390px;top:197px;width:30px;height:12px;background:#eef0f4"></div><div style="position:absolute;left:393px;top:199px;height:8px;line-height:8px;font-size:4.2px;color:#6b7280;white-space:nowrap;">Next</div><div style="position:absolute;left:79px;top:220px;width:341px;height:16px;background:#f5f7fa;border-top:0.6px solid #e9ecef"></div><div style="position:absolute;left:381px;top:224px;height:8px;line-height:8px;font-size:4.2px;color:#4b5563;white-space:nowrap;">Version 1.0</div><div style="position:absolute;left:360px;top:95px;width:70px;height:90px;background:radial-gradient(ellipse at 75% 50%,rgba(125,211,252,0.55),rgba(125,211,252,0) 65%)"></div><div style="position:absolute;left:388px;top:109px;width:40px;height:63px;background:linear-gradient(160deg,#1f3f6e,#0e7fc4);border-radius:9px"></div><div style="position:absolute;left:397px;top:133px;width:13px;height:16px;border:1.8px solid #fff;border-radius:2px"></div><div style="position:absolute;left:400px;top:140px;width:8px;height:1.4px;background:#fff"></div><div style="position:absolute;left:400px;top:143.5px;width:8px;height:1.4px;background:#fff"></div><div style="position:absolute;left:400px;top:136.5px;width:3px;height:1.4px;background:#fff"></div><div style="position:absolute;left:360px;top:0px;width:60px;height:236px;background:linear-gradient(to right,rgba(0,0,0,0),rgba(0,0,0,0.12))"></div></div></div><!--/live-->
  <div id="stats"><div class="card" style="left:12px"><div class="num" style="color:#4ade80">39</div><div class="clbl" style="left:16px"><span style="position:relative;display:inline-block;width:13px;height:11px;vertical-align:-1px"><svg style="position:absolute;left:0;top:0" width="11" height="11" viewBox="0 0 15 15"><rect width="15" height="15" rx="2.5" fill="#5fb94a"/><path d="M3.3 7.8 L6.2 10.8 L11.8 3.8" fill="none" stroke="#fff" stroke-width="2.4" stroke-linecap="round" stroke-linejoin="round"/></svg></span>PASARON</div></div><div class="card" style="left:113px"><div class="num" style="color:#f87171">11</div><div class="clbl" style="left:15.5px"><span style="position:relative;display:inline-block;width:13px;height:11px;vertical-align:-1px"><svg style="position:absolute;left:0;top:2px" width="8" height="8" viewBox="0 0 8 8"><path d="M1 1 L7 7 M7 1 L1 7" stroke="#cbd5e1" stroke-width="1.1"/></svg></span>FALLARON</div></div><div class="card" style="left:214px"><div class="num" style="color:#fbbf24">7</div><div class="clbl" style="left:21px"><span style="position:relative;display:inline-block;width:13px;height:11px;vertical-align:-1px"><svg style="position:absolute;left:0;top:1px" width="10" height="9" viewBox="0 0 10 9"><path d="M5 0.8 L9.4 8.4 L0.6 8.4 Z" fill="none" stroke="#cbd5e1" stroke-width="1"/><path d="M5 3.3 L5 5.9" stroke="#cbd5e1" stroke-width="0.9"/><circle cx="5" cy="7.1" r="0.5" fill="#cbd5e1"/></svg></span>AVISOS</div></div><div class="card" style="left:315px"><div class="num" style="color:#38bdf8">57</div><div class="clbl" style="left:23px"><span style="position:relative;display:inline-block;width:13px;height:11px;vertical-align:-1px"><svg style="position:absolute;left:0;top:-2px" width="11" height="14" viewBox="0 0 11 14"><rect x="4.2" y="0.5" width="3" height="7.5" rx="0.8" transform="rotate(-20 5.7 4)" fill="#94a3b8"/><path d="M1 13.2 L10 13.2" stroke="#cbd5e1" stroke-width="1.4"/><path d="M3 12.5 Q1.8 9 4.5 7.5" fill="none" stroke="#cbd5e1" stroke-width="1.2"/><rect x="2.5" y="10.5" width="6" height="1.6" fill="#64748b"/></svg></span>TOTAL</div></div></div>
  <div id="reps"><svg class="abs" style="left:13px;top:14px" width="13" height="11" viewBox="0 0 13 11"><path d="M0.5 1.5 Q0.5 0.5 1.5 0.5 L4.5 0.5 L5.8 2 L11.5 2 Q12.5 2 12.5 3 L12.5 10 Q12.5 10.5 12 10.5 L1 10.5 Q0.5 10.5 0.5 10 Z" fill="#e0a82e"/><path d="M0.5 4 L12.5 4 L12.5 10 Q12.5 10.5 12 10.5 L1 10.5 Q0.5 10.5 0.5 10 Z" fill="#f6c445"/></svg><div class="abs" style="left:31px;top:12px;font-size:12px;font-weight:bold;letter-spacing:0.13px;line-height:14px;color:#94a3b8;white-space:nowrap">REPORTES ANTERIORES</div><div class="rep" style="top:34px"><svg class="abs" style="left:9px;top:6px" width="12" height="14" viewBox="0 0 12 14"><path d="M0.8 0.8 L8 0.8 L11.2 4 L11.2 13.2 L0.8 13.2 Z" fill="#f1f5f9" stroke="#cbd5e1" stroke-width="0.6"/><path d="M8 0.8 L8 4 L11.2 4" fill="#cbd5e1"/><g stroke="#cbd5e1" stroke-width="0.6"><path d="M2.5 6 L9.5 6 M2.5 8 L9.5 8 M2.5 10 L9.5 10"/></g></svg><span class="rn">report_44de5d7c-3cd9-4874-ac6a-04baf406ff14_17...</span><span class="rd">9/4/2026</span></div><div class="rep" style="top:66px"><svg class="abs" style="left:9px;top:6px" width="12" height="14" viewBox="0 0 12 14"><path d="M0.8 0.8 L8 0.8 L11.2 4 L11.2 13.2 L0.8 13.2 Z" fill="#f1f5f9" stroke="#cbd5e1" stroke-width="0.6"/><path d="M8 0.8 L8 4 L11.2 4" fill="#cbd5e1"/><g stroke="#cbd5e1" stroke-width="0.6"><path d="M2.5 6 L9.5 6 M2.5 8 L9.5 8 M2.5 10 L9.5 10"/></g></svg><span class="rn">report_4d3029f1-d778-4649-86d0-4dc0d9137bed_...</span><span class="rd">9/4/2026</span></div><div class="rep" style="top:98px"><svg class="abs" style="left:9px;top:6px" width="12" height="14" viewBox="0 0 12 14"><path d="M0.8 0.8 L8 0.8 L11.2 4 L11.2 13.2 L0.8 13.2 Z" fill="#f1f5f9" stroke="#cbd5e1" stroke-width="0.6"/><path d="M8 0.8 L8 4 L11.2 4" fill="#cbd5e1"/><g stroke="#cbd5e1" stroke-width="0.6"><path d="M2.5 6 L9.5 6 M2.5 8 L9.5 8 M2.5 10 L9.5 10"/></g></svg><span class="rn">report_4437da1e-07c9-492b-a9ee-2b3e3b3198b1_...</span><span class="rd">9/4/2026</span></div><div class="abs" style="left:404px;top:0;width:16px;height:124px;background:#f5f5f5;border-left:1px solid #cfd4da"></div></div>
</div>
<div id="fade"></div>
</body>
</html>
